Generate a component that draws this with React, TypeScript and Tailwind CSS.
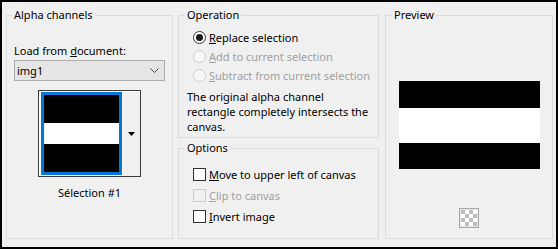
import React from "react";

function Radio({ checked, disabled }: { checked?: boolean; disabled?: boolean }) {
  return (
    <svg width="13" height="13" viewBox="0 0 13 13" className="shrink-0">
      <circle cx="6.5" cy="6.5" r="6" fill={disabled ? "#f7f7f7" : "#ffffff"} stroke={disabled ? "#cccccc" : "#333333"} strokeWidth="1" />
      {checked && <circle cx="6.5" cy="6.5" r="3.5" fill="#1a1a1a" />}
    </svg>
  );
}

function Check({ disabled }: { disabled?: boolean }) {
  return (
    <div
      className={
        disabled
          ? "w-[13px] h-[13px] shrink-0 border border-[#cccccc] bg-[#f0f0f0]"
          : "w-[13px] h-[13px] shrink-0 border border-[#333333] bg-white"
      }
    />
  );
}

function Checker() {
  const cells: React.ReactNode[] = [];
  for (let r = 0; r < 4; r++) {
    for (let c = 0; c < 4; c++) {
      cells.push(
        <rect key={`${r}-${c}`} x={2 + c * 4} y={2 + r * 4} width="4" height="4" fill={(r + c) % 2 === 0 ? "#bdbdbd" : "#ffffff"} />
      );
    }
  }
  return (
    <svg width="20" height="20" viewBox="0 0 20 20">
      <rect x="0.5" y="0.5" width="19" height="19" fill="#e8e8e8" stroke="#a8a8a8" />
      {cells}
    </svg>
  );
}

export default function App() {
  return (
    <div className="w-[558px] h-[249px] border-2 border-black bg-[#f0f0f0] flex pl-[4px] pt-[5px] text-[11px] text-black font-['Noto_Sans','DejaVu_Sans',sans-serif] leading-[16px] whitespace-nowrap">
      {/* Alpha channels */}
      <fieldset className="w-[167px] h-[232px] border border-[#dcdcdc] shrink-0 flex flex-col">
        <legend className="ml-[5px] px-[2px] leading-[16px]">Alpha channels</legend>
        <div className="pl-[7px] pt-[20px]">
          <div className="leading-[16px]">
            Load from <u>d</u>ocument:
          </div>
          <div className="mt-[1px] w-[151px] h-[21px] border border-[#adadad] bg-[#e5e5e5] flex items-center justify-between pl-[2px] pr-[5px]">
            <span>img1</span>
            <svg width="9" height="5" viewBox="0 0 9 5">
              <path d="M0.5 0.5 L4.5 4.5 L8.5 0.5" fill="none" stroke="#444" strokeWidth="1" />
            </svg>
          </div>
        </div>
        <div className="flex justify-center mt-[9px]">
          <div className="w-[103px] h-[87px] border border-[#3a3a3a] bg-white flex">
            <div className="pl-[2px] pt-[1px]">
              <div className="w-[81px] h-[83px] border-[3px] border-[#0078d7] flex flex-col">
                <div className="h-[28px] bg-black" />
                <div className="h-[21px] bg-white" />
                <div className="h-[28px] bg-black" />
              </div>
            </div>
            <div className="flex-1 bg-[#f0f0f0] border-l border-t border-white border-r-0 flex items-center justify-center">
              <svg width="7" height="4" viewBox="0 0 7 4">
                <path d="M0 0 H7 L3.5 4 Z" fill="#000" />
              </svg>
            </div>
          </div>
        </div>
        <div className="text-center mt-[8px] leading-[16px]">Sélection #1</div>
      </fieldset>

      {/* Middle column */}
      <div className="ml-[5px] w-[201px] shrink-0 flex flex-col">
        <fieldset className="h-[131px] border border-[#dcdcdc]">
          <legend className="ml-[6px] px-[2px] leading-[16px]">Operation</legend>
          <div className="pl-[14px] pt-[5px] flex flex-col">
            <div className="h-[19px] flex items-center gap-[3px]">
              <Radio checked />
              <span>
                <u>R</u>eplace selection
              </span>
            </div>
            <div className="h-[19px] flex items-center gap-[3px] text-[#a0a0a0]">
              <Radio disabled />
              <span>
                <u>A</u>dd to current selection
              </span>
            </div>
            <div className="h-[19px] flex items-center gap-[3px] text-[#a0a0a0]">
              <Radio disabled />
              <span>
                <u>S</u>ubtract from current selection
              </span>
            </div>
          </div>
          <div className="pl-[8px] mt-[4px] leading-[15px]">
            The original alpha channel
            <br />
            rectangle completely intersects the
            <br />
            canvas.
          </div>
        </fieldset>
        <fieldset className="mt-[2px] h-[99px] border border-[#dcdcdc]">
          <legend className="ml-[6px] px-[2px] leading-[16px]">Options</legend>
          <div className="pl-[14px] pt-[8px] flex flex-col">
            <div className="h-[21px] flex items-center gap-[3px]">
              <Check />
              <span>
                <u>M</u>ove to upper left of canvas
              </span>
            </div>
            <div className="h-[21px] flex items-center gap-[3px] text-[#a0a0a0]">
              <Check disabled />
              <span>
                <u>C</u>lip to canvas
              </span>
            </div>
            <div className="h-[21px] flex items-center gap-[3px]">
              <Check />
              <span>
                <u>I</u>nvert image
              </span>
            </div>
          </div>
        </fieldset>
      </div>

      {/* Preview */}
      <fieldset className="ml-[6px] w-[168px] h-[232px] border border-[#dcdcdc] shrink-0 flex flex-col items-center">
        <legend className="ml-[6px] px-[2px] leading-[16px]">Preview</legend>
        <div className="mt-[58px] w-[141px] flex flex-col">
          <div className="h-[27px] bg-black" />
          <div className="h-[35px] bg-white" />
          <div className="h-[26px] bg-black" />
        </div>
        <div className="mt-[39px]">
          <Checker />
        </div>
      </fieldset>
    </div>
  );
}
